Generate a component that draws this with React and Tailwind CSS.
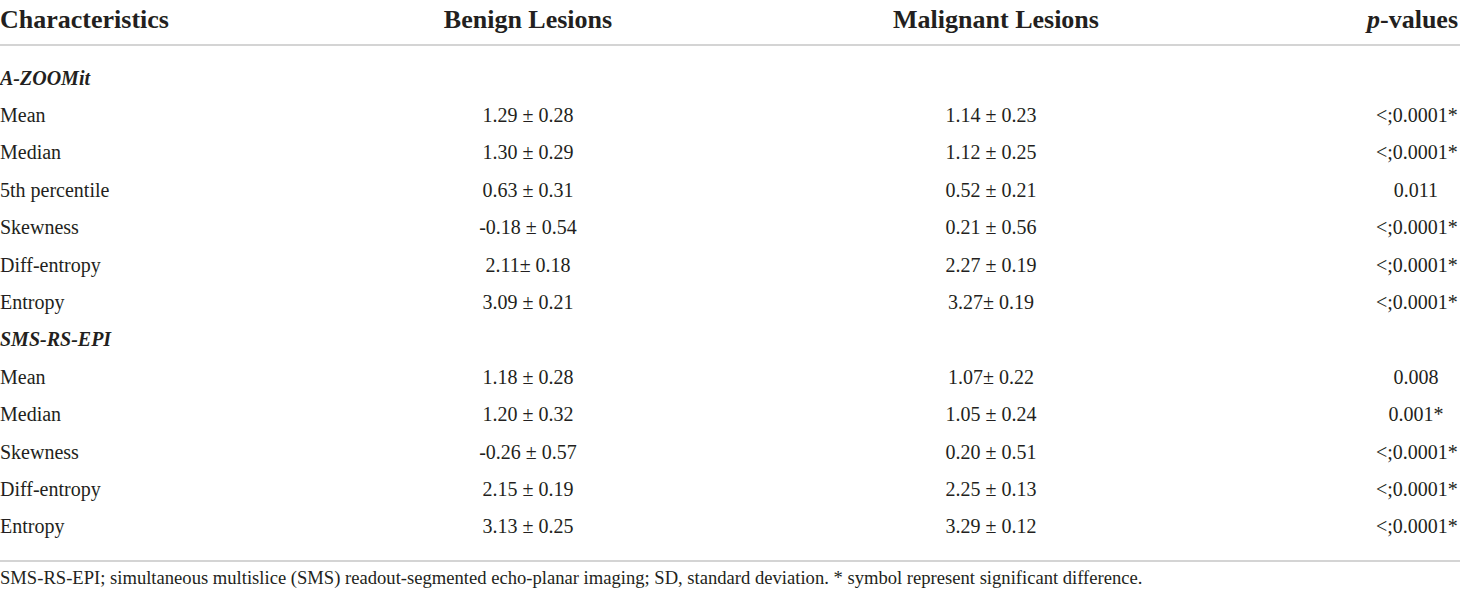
const rows = [
  { section: 'A-ZOOMit' },
  { name: 'Mean', benign: '1.29 ± 0.28', malignant: '1.14 ± 0.23', p: '<;0.0001*' },
  { name: 'Median', benign: '1.30 ± 0.29', malignant: '1.12 ± 0.25', p: '<;0.0001*' },
  { name: '5th percentile', benign: '0.63 ± 0.31', malignant: '0.52 ± 0.21', p: '0.011' },
  { name: 'Skewness', benign: '-0.18 ± 0.54', malignant: '0.21 ± 0.56', p: '<;0.0001*' },
  { name: 'Diff-entropy', benign: '2.11± 0.18', malignant: '2.27 ± 0.19', p: '<;0.0001*' },
  { name: 'Entropy', benign: '3.09 ± 0.21', malignant: '3.27± 0.19', p: '<;0.0001*' },
  { section: 'SMS-RS-EPI' },
  { name: 'Mean', benign: '1.18 ± 0.28', malignant: '1.07± 0.22', p: '0.008' },
  { name: 'Median', benign: '1.20 ± 0.32', malignant: '1.05 ± 0.24', p: '0.001*' },
  { name: 'Skewness', benign: '-0.26 ± 0.57', malignant: '0.20 ± 0.51', p: '<;0.0001*' },
  { name: 'Diff-entropy', benign: '2.15 ± 0.19', malignant: '2.25 ± 0.13', p: '<;0.0001*' },
  { name: 'Entropy', benign: '3.13 ± 0.25', malignant: '3.29 ± 0.12', p: '<;0.0001*' },
];

const grid = 'grid grid-cols-[330px_396px_534px_1fr_84px] items-center';

const App = () => {
  return (
    <div className="w-[1460px] bg-white text-[#231f20] font-['Liberation_Serif',serif]">
      {/* Header */}
      <div className={`${grid} h-[46px] border-b-2 border-[#d4d4d4] text-[26px] font-bold pb-[6px]`}>
        <div>Characteristics</div>
        <div className="text-center">Benign Lesions</div>
        <div className="text-center pl-[6px]">Malignant Lesions</div>
        <div className="col-span-2 text-right pr-[2px]">
          <i>p</i>-values
        </div>
      </div>

      {/* Body */}
      <div className="pt-[13px] pb-[15px] border-b-2 border-[#d4d4d4] text-[20px]">
        {rows.map((row, i) =>
          row.section ? (
            <div key={i} className="h-[37.4px] flex items-center font-bold italic">
              {row.section}
            </div>
          ) : (
            <div key={i} className={`${grid} h-[37.4px]`}>
              <div>{row.name}</div>
              <div className="text-center">{row.benign}</div>
              <div className="text-center pr-[4px]">{row.malignant}</div>
              <div />
              <div className="text-center whitespace-nowrap pr-[4px]">{row.p}</div>
            </div>
          )
        )}
      </div>

      {/* Footnote */}
      <p className="pt-[4px] text-[18.6px] leading-[24px]">
        SMS-RS-EPI; simultaneous multislice (SMS) readout-segmented echo-planar imaging; SD, standard deviation. * symbol represent significant difference.
      </p>
    </div>
  );
};

export default App;
